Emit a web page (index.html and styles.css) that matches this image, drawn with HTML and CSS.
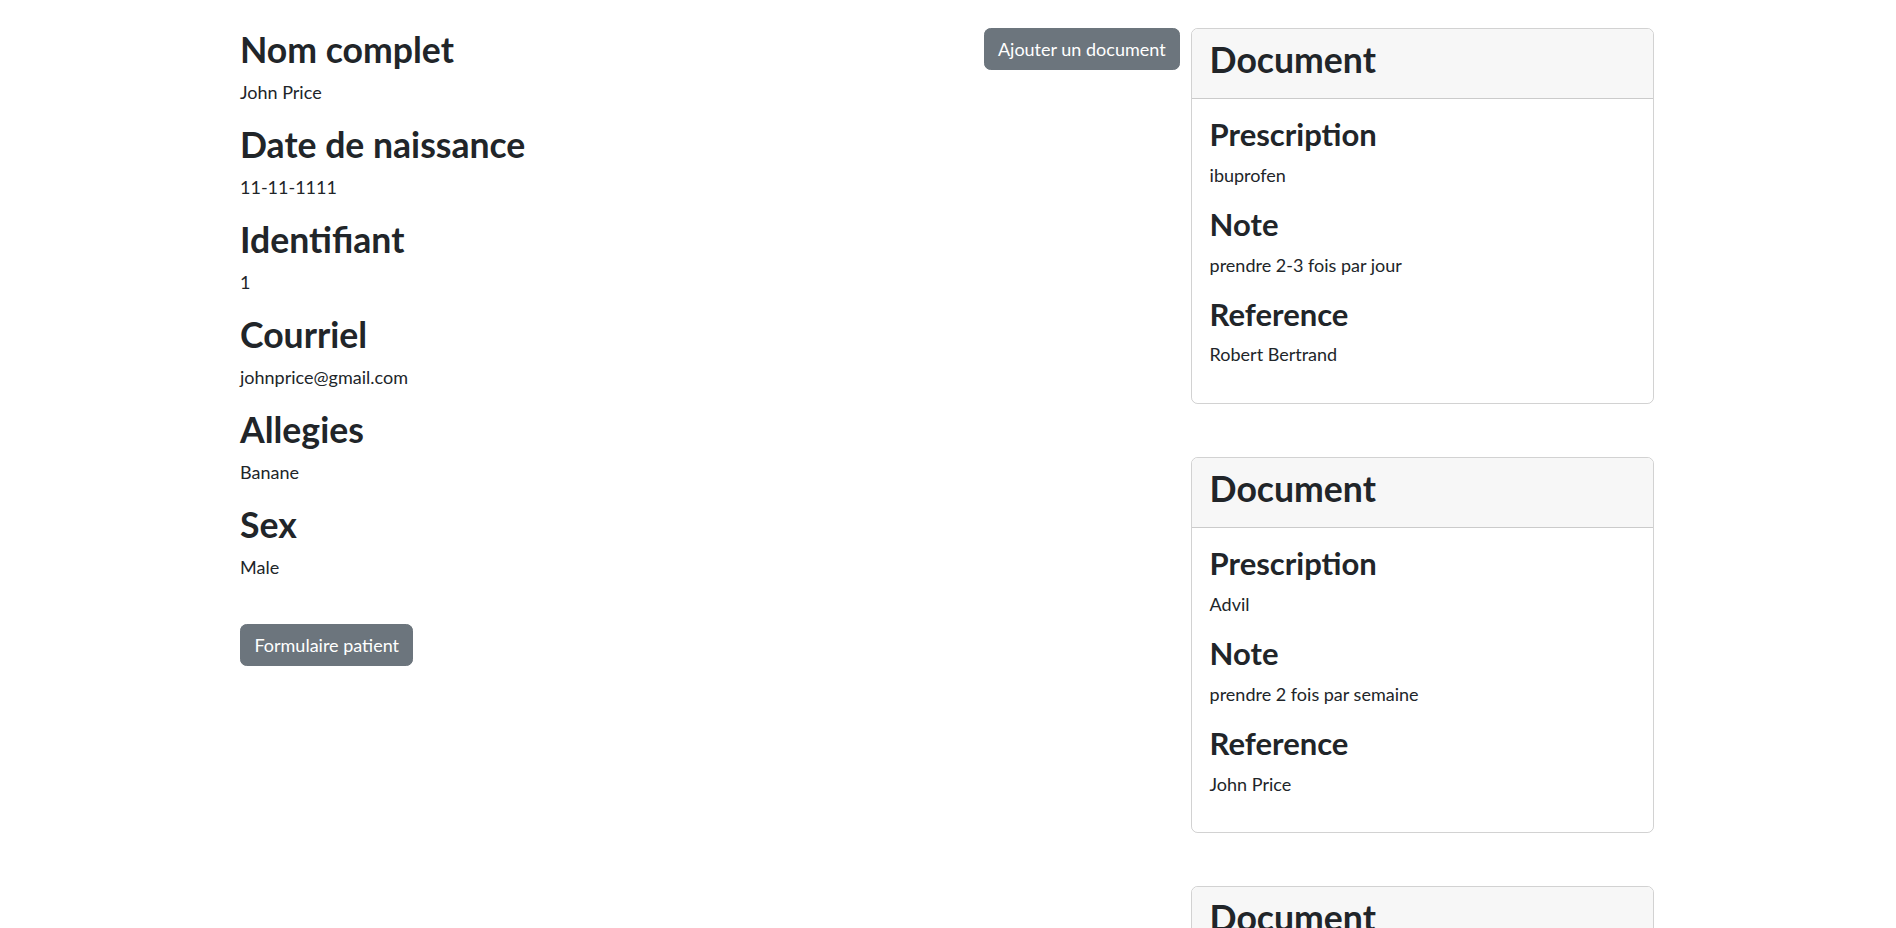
FILE: index.html
```html
<!DOCTYPE html>
<html lang="fr">
<head>
<meta charset="utf-8">
<title>Patient</title>
<link rel="stylesheet" href="styles.css">
</head>
<body>
<div class="container">
  <div class="patient">
    <div class="fields">
      <h2 class="title">Nom complet</h2>
      <p class="value">John Price</p>
      <h2 class="title">Date de naissance</h2>
      <p class="value">11-11-1111</p>
      <h2 class="title">Identifiant</h2>
      <p class="value">1</p>
      <h2 class="title">Courriel</h2>
      <p class="value">johnprice@gmail.com</p>
      <h2 class="title">Allegies</h2>
      <p class="value">Banane</p>
      <h2 class="title">Sex</h2>
      <p class="value">Male</p>
      <button class="btn btn-form">Formulaire patient</button>
    </div>
    <button class="btn">Ajouter un document</button>
  </div>
  <div class="documents">
    <div class="card">
      <div class="card-header"><h2 class="title">Document</h2></div>
      <div class="card-body">
        <h3 class="subtitle">Prescription</h3>
        <p class="value">ibuprofen</p>
        <h3 class="subtitle">Note</h3>
        <p class="value">prendre 2-3 fois par jour</p>
        <h3 class="subtitle">Reference</h3>
        <p class="value">Robert Bertrand</p>
      </div>
    </div>
    <div class="card">
      <div class="card-header"><h2 class="title">Document</h2></div>
      <div class="card-body">
        <h3 class="subtitle">Prescription</h3>
        <p class="value">Advil</p>
        <h3 class="subtitle">Note</h3>
        <p class="value">prendre 2 fois par semaine</p>
        <h3 class="subtitle">Reference</h3>
        <p class="value">John Price</p>
      </div>
    </div>
    <div class="card">
      <div class="card-header"><h2 class="title">Document</h2></div>
      <div class="card-body">
        <h3 class="subtitle">Prescription</h3>
        <p class="value">Tylenol</p>
        <h3 class="subtitle">Note</h3>
        <p class="value">prendre 1 fois par jour</p>
        <h3 class="subtitle">Reference</h3>
        <p class="value">John Price</p>
      </div>
    </div>
  </div>
</div>
</body>
</html>
```
FILE: styles.css
```css
html, body {
  margin: 0;
  padding: 0;
  background: #fff;
}
body {
  font-family: Lato, "Liberation Sans", sans-serif;
  color: #212529;
  font-size: 18px;
  line-height: 26.4px;
  overflow: hidden;
}
.container {
  display: grid;
  grid-template-columns: 940px 463px;
  column-gap: 11px;
  padding: 28px 0 0 240px;
  align-items: start;
}
.patient {
  display: flex;
  justify-content: space-between;
  align-items: flex-start;
}
.fields {
  display: flex;
  flex-direction: column;
  align-items: flex-start;
}
.title {
  font-size: 35.6px;
  font-weight: 700;
  line-height: 42.24px;
  padding-top: 1.2px;
  margin: 0 0 7.6px;
}
.subtitle {
  font-size: 31px;
  font-weight: 700;
  line-height: 36.96px;
  margin: 0 0 8.8px;
}
.value {
  margin: 0 0 17.6px;
  font-size: 18px;
  line-height: 26.4px;
}
.btn {
  font-family: inherit;
  font-size: 18px;
  line-height: 26.4px;
  color: #fff;
  background: #6c757d;
  border: 1px solid #6c757d;
  border-radius: 6.6px;
  padding: 6.6px 13.4px;
  cursor: pointer;
}
.btn-form {
  margin-top: 26.4px;
}
.documents {
  display: flex;
  flex-direction: column;
  gap: 53px;
}
.card {
  border: 1px solid rgba(0, 0, 0, 0.175);
  border-radius: 6.6px;
  overflow: hidden;
}
.card-header {
  background: #f7f7f7;
  border-bottom: 1px solid rgba(0, 0, 0, 0.175);
  padding: 8.8px 17.6px;
}
.card-body {
  padding: 17.6px;
}
```
